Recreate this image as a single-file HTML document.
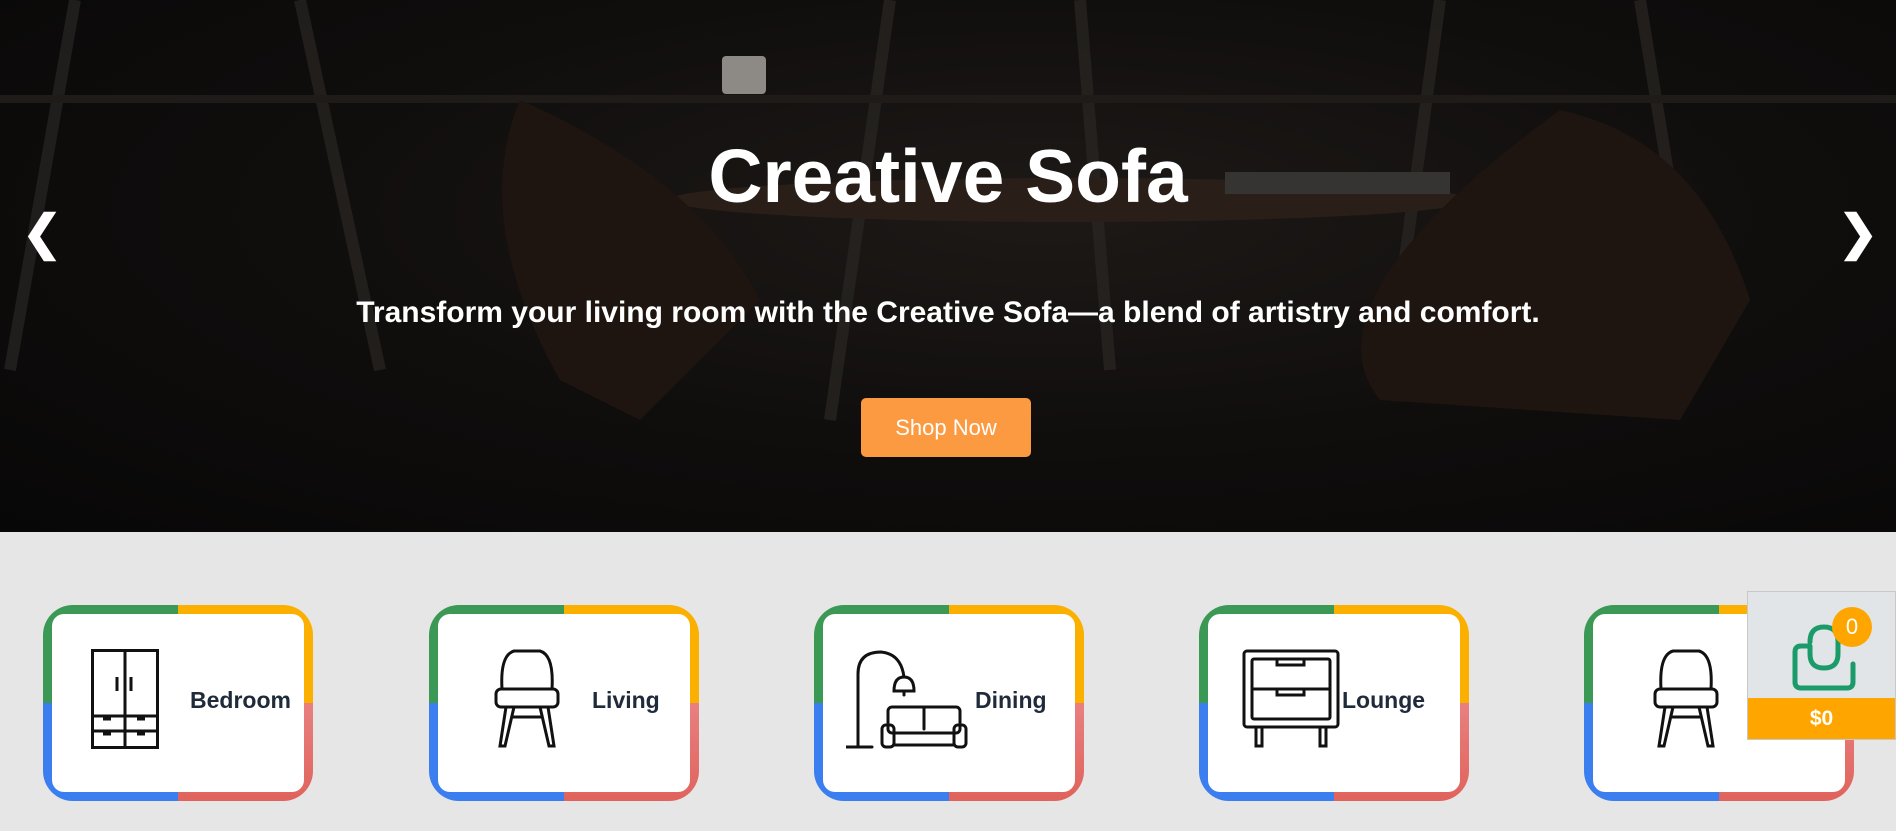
<!DOCTYPE html>
<html><head><meta charset="utf-8"><style>
*{margin:0;padding:0;box-sizing:border-box}
body{width:1896px;height:831px;overflow:hidden;background:#e6e6e6;font-family:"Liberation Sans",Arial,sans-serif;position:relative}
.hero{position:absolute;left:0;top:0;width:1896px;height:532px;overflow:hidden;
background:radial-gradient(ellipse at 55% 40%,#1d1917 0%,#100e0d 50%,#080707 100%)}
.hero h1{position:absolute;left:0;width:100%;top:133px;text-align:center;color:#fff;font-size:75px;font-weight:bold}
.hero p{position:absolute;left:0;width:100%;top:296px;text-align:center;color:#fff;font-size:30px;font-weight:bold}
.btn{position:absolute;left:861px;top:398px;width:170px;height:59px;background:#fb9a40;border-radius:5px;color:#fff;font-size:22px;line-height:59px;text-align:center}
.arr{position:absolute;top:205px;color:#fff;font-size:48px;font-weight:bold}
.card{position:absolute;top:605px;width:270px;height:196px;border-radius:30px;
background:linear-gradient(#3b9955,#3b9955) 0 0/50% 50% no-repeat,linear-gradient(#fbb000,#fbb000) 100% 0/50% 50% no-repeat,linear-gradient(#3a7ef0,#3a7ef0) 0 100%/50% 50% no-repeat,linear-gradient(#e88080,#e0635c) 100% 100%/50% 50% no-repeat}
.in{position:absolute;left:9px;top:9px;right:9px;bottom:9px;background:#fff;border-radius:12px}
.card svg{position:absolute;top:44px}
.card span{position:absolute;top:82px;font-size:23px;font-weight:bold;color:#1f2a3a}
.cart{position:absolute;left:1747px;top:591px;width:149px;height:149px;background:#e1e5e8;border:1px solid #c8c8c8}
.cart .bar{position:absolute;left:0;bottom:0;width:100%;height:41px;background:#ffa500;color:#fff;font-weight:bold;font-size:21px;text-align:center;line-height:41px}
.badge{position:absolute;left:84px;top:15px;width:40px;height:40px;border-radius:50%;background:#ffa500;color:#fff;font-size:22px;text-align:center;line-height:40px}
</style></head><body>
<div class="hero">
<svg width="1896" height="532" style="position:absolute;left:0;top:0" fill="none">
<g stroke="#2a2724" stroke-width="12" opacity=".7">
<line x1="75" y1="0" x2="10" y2="370"/><line x1="300" y1="0" x2="380" y2="370"/>
<line x1="890" y1="0" x2="830" y2="420"/><line x1="1080" y1="0" x2="1110" y2="370"/>
<line x1="1440" y1="0" x2="1390" y2="370"/><line x1="1640" y1="0" x2="1700" y2="370"/>
</g>
<rect x="0" y="95" width="1896" height="8" fill="#1f1b19"/>
<ellipse cx="1070" cy="200" rx="400" ry="22" fill="#2a1f18"/>
<path d="M520 100 Q470 220 560 380 L640 420 L760 300 Q700 180 520 100Z" fill="#1e1510"/>
<path d="M1560 110 Q1700 140 1750 300 L1680 420 L1380 400 Q1300 300 1560 110Z" fill="#1e1510"/>
<rect x="722" y="56" width="44" height="38" rx="4" fill="#8d8a85"/>
<rect x="1225" y="172" width="225" height="22" fill="#353432"/>
</svg>
<div class="arr" style="left:22px">&#10094;</div>
<div class="arr" style="left:1838px">&#10095;</div>
<h1>Creative Sofa</h1>
<p>Transform your living room with the Creative Sofa—a blend of artistry and comfort.</p>
<div class="btn">Shop Now</div>
</div>

<div class="card" style="left:43px"><div class="in"></div>
<svg style="left:48px" width="68" height="100" viewBox="0 0 68 100" fill="none" stroke="#111" stroke-width="3">
<rect x="1.5" y="1.5" width="65" height="97"/><line x1="34" y1="1.5" x2="34" y2="98"/>
<line x1="1.5" y1="67" x2="66" y2="67"/><line x1="1.5" y1="82" x2="66" y2="82"/>
<line x1="26" y1="28" x2="26" y2="42"/><line x1="40" y1="28" x2="40" y2="42"/>
<line x1="12" y1="70" x2="20" y2="70"/><line x1="46" y1="70" x2="54" y2="70"/>
<line x1="12" y1="85" x2="20" y2="85"/><line x1="46" y1="85" x2="54" y2="85"/></svg>
<span style="left:147px">Bedroom</span></div>

<div class="card" style="left:429px"><div class="in"></div>
<svg style="left:65px" width="66" height="100" viewBox="0 0 66 100" fill="none" stroke="#111" stroke-width="3" stroke-linecap="round">
<path d="M8 40 Q6 6 20 2 H46 Q60 6 58 40"/><rect x="2" y="40" width="62" height="18" rx="5"/>
<path d="M12 58 L6 97 H11 L20 58 M54 58 L60 97 H55 L46 58 M18 68 H48"/></svg>
<span style="left:163px">Living</span></div>

<div class="card" style="left:814px"><div class="in"></div>
<svg style="left:32px" width="130" height="100" viewBox="0 0 130 100" fill="none" stroke="#111" stroke-width="3" stroke-linecap="round">
<path d="M0 98 H26 M12 98 V25 Q12 3 35 3 Q55 5 58 28"/><path d="M48 42 Q48 28 58 28 Q68 28 68 42 Z M58 42 V46"/>
<rect x="42" y="58" width="72" height="26" rx="4"/><line x1="78" y1="58" x2="78" y2="80"/>
<rect x="36" y="76" width="12" height="22" rx="4"/><rect x="108" y="76" width="12" height="22" rx="4"/><path d="M48 84 H108 M48 96 H108"/></svg>
<span style="left:161px">Dining</span></div>

<div class="card" style="left:1199px"><div class="in"></div>
<svg style="left:43px" width="100" height="100" viewBox="0 0 100 100" fill="none" stroke="#111" stroke-width="3" stroke-linecap="round">
<rect x="2" y="2" width="94" height="76" rx="3"/><rect x="10" y="10" width="78" height="60" rx="2"/><line x1="10" y1="40" x2="88" y2="40"/>
<path d="M35 12 V16 H62 V12 M35 42 V46 H62 V42 M14 78 V97 H20 V78 M78 78 V97 H84 V78"/></svg>
<span style="left:143px">Lounge</span></div>

<div class="card" style="left:1584px"><div class="in"></div>
<svg style="left:69px" width="66" height="100" viewBox="0 0 66 100" fill="none" stroke="#111" stroke-width="3" stroke-linecap="round">
<path d="M8 40 Q6 6 20 2 H46 Q60 6 58 40"/><rect x="2" y="40" width="62" height="18" rx="5"/>
<path d="M12 58 L6 97 H11 L20 58 M54 58 L60 97 H55 L46 58 M18 68 H48"/></svg></div>

<div class="cart">
<svg style="position:absolute;left:44px;top:32px" width="64" height="68" viewBox="0 0 64 68" fill="none" stroke="#1b9a6a" stroke-width="5" stroke-linecap="round">
<path d="M16 22 H9 Q3 22 3 28 V58 Q3 64 9 64 H55 Q61 64 61 58 V40"/><path d="M18 22 V30 Q18 44 32 44 Q46 44 46 30 V18 Q46 3 32 3 Q18 3 18 18"/></svg>
<div class="badge">0</div>
<div class="bar">$0</div>
</div>
</body></html>
